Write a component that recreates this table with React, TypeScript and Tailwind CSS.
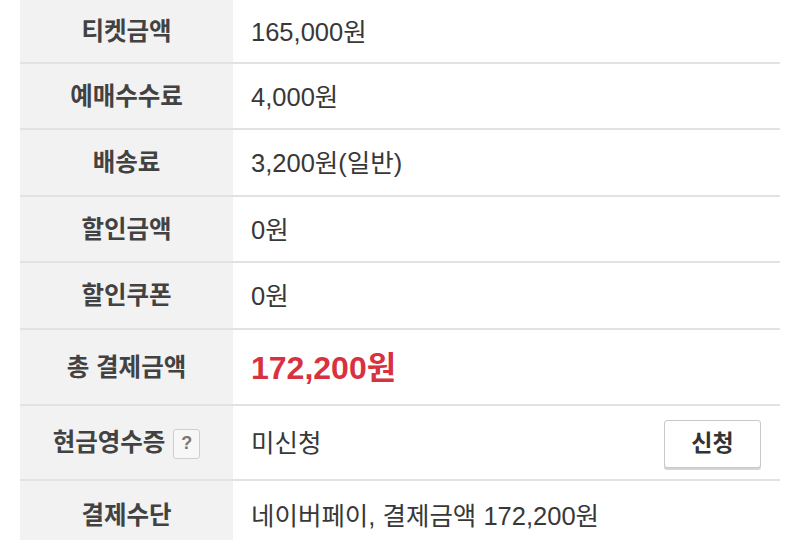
import React from 'react';

type Row = {
  label: string;
  value: React.ReactNode;
  h: string;
  help?: boolean;
  action?: string;
};

const rows: Row[] = [
  { label: '티켓금액', value: '165,000원', h: 'h-[64px]' },
  { label: '예매수수료', value: '4,000원', h: 'h-[66px]' },
  { label: '배송료', value: '3,200원(일반)', h: 'h-[67px]' },
  { label: '할인금액', value: '0원', h: 'h-[66px]' },
  { label: '할인쿠폰', value: '0원', h: 'h-[67px]' },
  {
    label: '총 결제금액',
    value: <span className="text-[32px] font-bold text-[#d8313f]">172,200원</span>,
    h: 'h-[76px]',
  },
  { label: '현금영수증', value: '미신청', h: 'h-[75px]', help: true, action: '신청' },
  { label: '결제수단', value: '네이버페이, 결제금액 172,200원', h: 'h-[70px]' },
];

const App = () => {
  return (
    <div
      className="w-[800px] h-[540px] overflow-hidden bg-white px-[20px] text-[#333]"
      style={{ fontFamily: '"Liberation Sans", "Noto Sans CJK KR", sans-serif' }}
    >
      <div className="w-[760px]">
        {rows.map((row) => (
          <div key={row.label} className={`flex ${row.h} border-b-2 border-[#e2e2e2]`}>
            {/* label cell */}
            <div className="w-[213px] shrink-0 bg-[#f2f2f2] flex items-center justify-center gap-[8px] pt-[2px] text-[24.5px] font-semibold text-[#424242]">
              <span>{row.label}</span>
              {row.help && (
                <span className="flex items-center justify-center w-[27px] h-[30px] border border-[#cfcfcf] rounded-[3px] bg-[#f7f7f7] text-[18px] font-bold text-[#777]">
                  ?
                </span>
              )}
            </div>
            {/* value cell */}
            <div className="flex-1 flex items-center justify-between pt-[2px] pl-[18px] pr-[19px] text-[25.5px] text-[#383838]">
              <span>{row.value}</span>
              {row.action && (
                <button className="w-[97px] h-[48px] border border-[#c8c8c8] rounded-[3px] bg-white shadow-[0_2px_0_#d5d5d5] text-[23px] font-semibold text-[#333]">
                  {row.action}
                </button>
              )}
            </div>
          </div>
        ))}
      </div>
    </div>
  );
};

export default App;
